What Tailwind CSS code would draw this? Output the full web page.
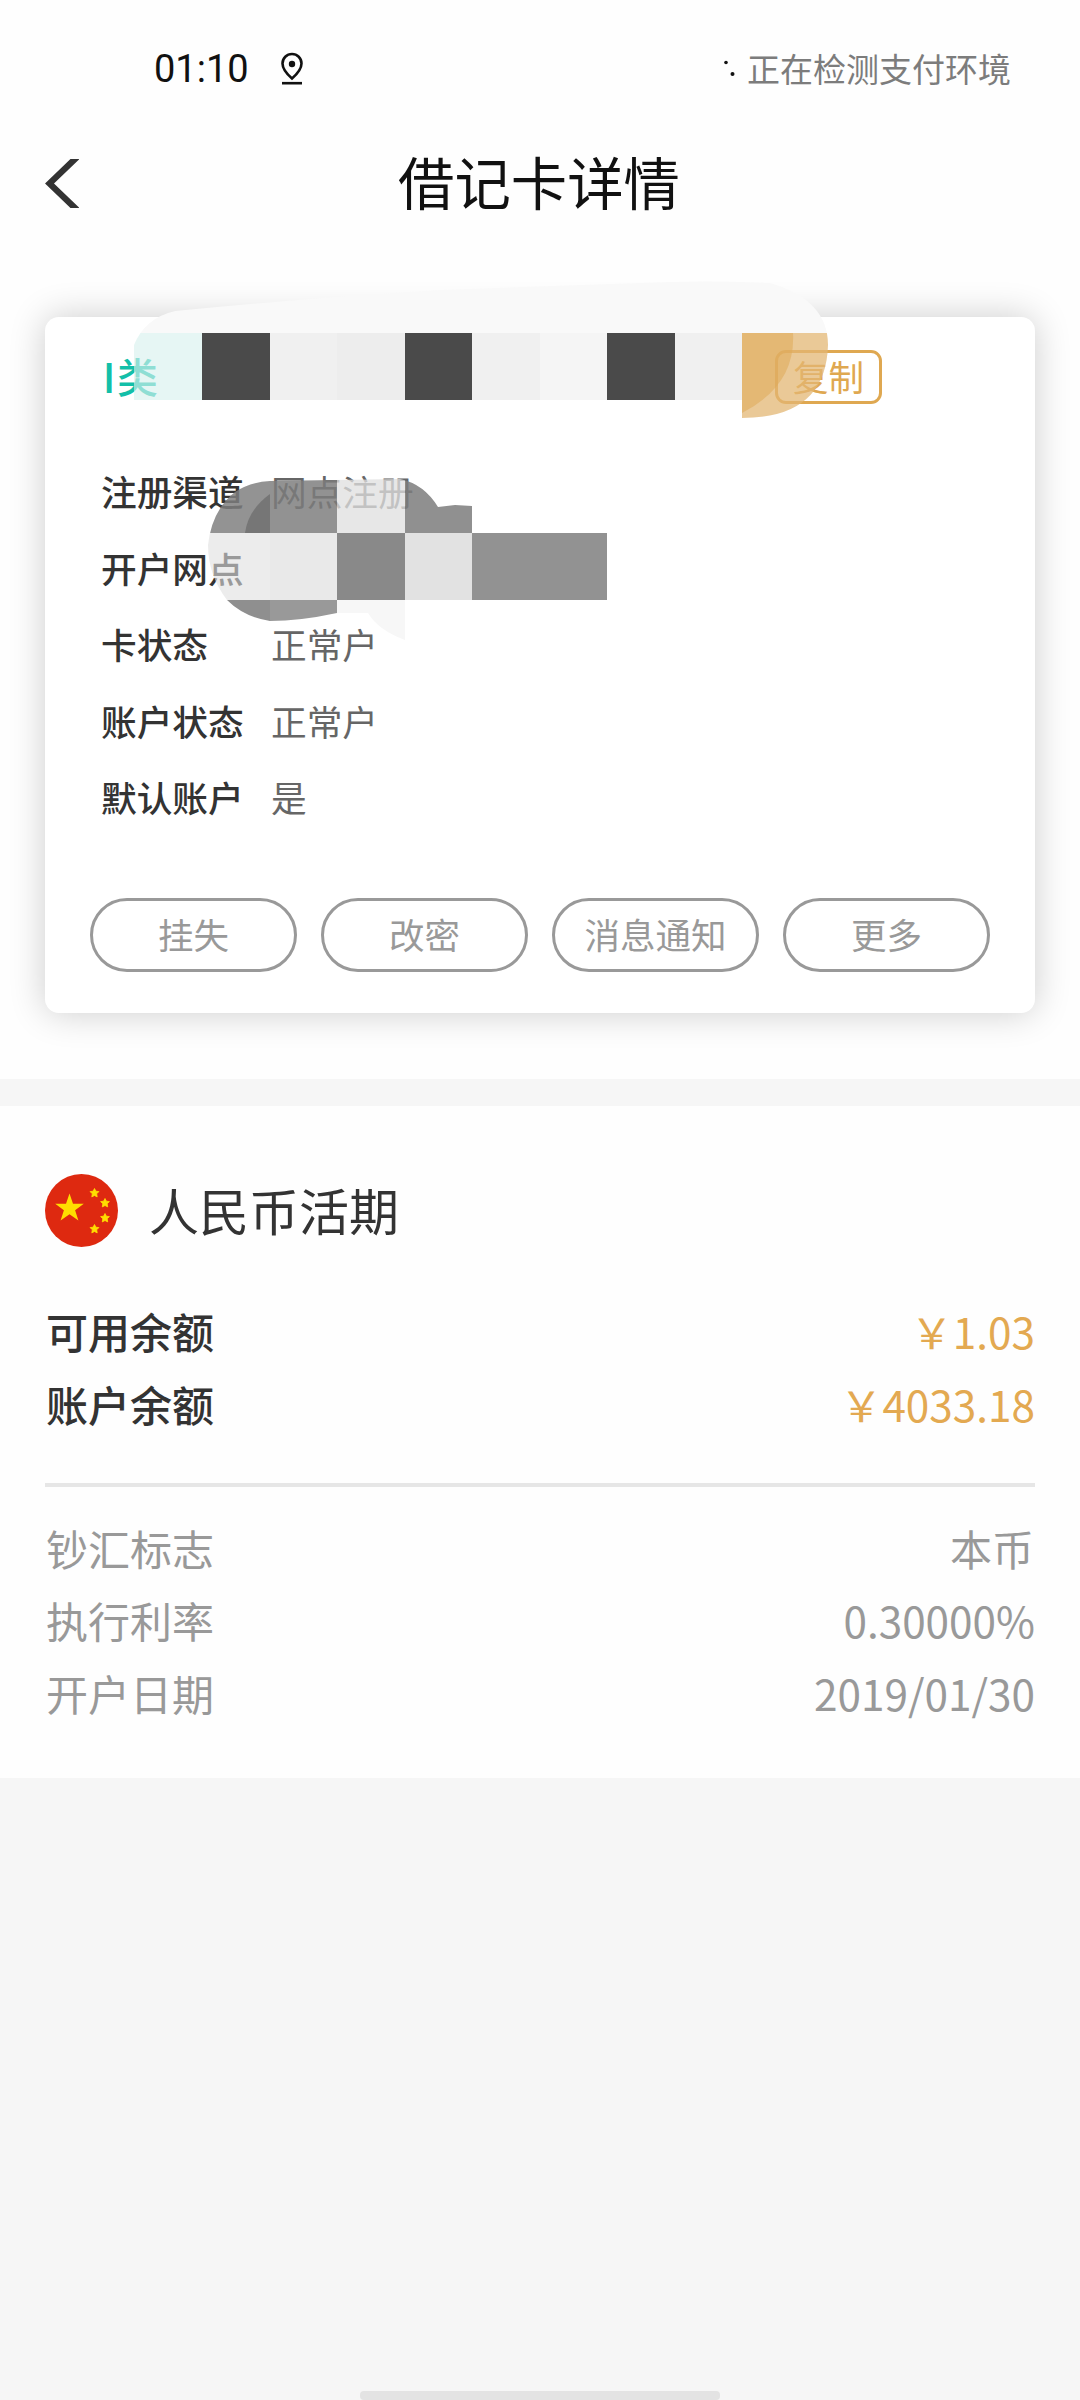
<!DOCTYPE html>
<html lang="zh-CN">
<head>
<meta charset="utf-8">
<title>借记卡详情</title>
<script src="https://cdn.jsdelivr.net/npm/@tailwindcss/browser@4"></script>
</head>
<body class="bg-[#f6f6f6] font-['Noto_Sans_CJK_SC',sans-serif] text-[#333]">
<div class="relative flex h-[2400px] w-[1080px] flex-col overflow-hidden">
  <section class="h-[1079px] bg-[#fefefe]">
    <div class="flex h-[138px] items-center pl-[154px] pr-[69px]">
      <span class="font-['Roboto',sans-serif] text-[38px] leading-none text-[#111]">01:10</span>
      <svg class="ml-[31px] h-[34px] w-[24px]" viewBox="0 0 24 34" fill="none" stroke="#111" stroke-width="2.600"><path d="M12 26.500C8 23 2.500 18 2.500 11.500a9.500 9.500 0 0 1 19 0C21.500 18 16 23 12 26.500z"/><circle cx="12" cy="12" r="3.200" fill="#111" stroke="none"/><path d="M2 31.200h20"/></svg>
      <svg class="ml-auto h-[20px] w-[12px]" viewBox="0 0 12 20" fill="#111"><circle cx="3" cy="3.500" r="1.800"/><circle cx="9.500" cy="15" r="2"/></svg>
      <span class="ml-[12px] pb-px text-[33px] leading-none text-[#7c7c7c]">正在检测支付环境</span>
    </div>
    <header class="flex h-[90px] items-center px-[45px]">
      <svg class="h-[49px] w-[34px]" viewBox="0 0 34 49" fill="none" stroke="#333" stroke-width="6.200"><path d="M32 -2L4.500 24.500L32 51"/></svg>
      <h1 class="ml-[319px] pb-[3px] text-[56.400px] leading-none text-[#111]">借记卡详情</h1>
    </header>
    <div class="mx-[45px] mt-[89px] flex h-[696px] flex-col rounded-[14px] bg-white pl-[56px] pr-[45px] pt-[33px] shadow-[0_0_36px_rgba(0,0,0,0.2)]">
      <div class="flex h-[54px] items-center">
        <span class="pb-[3px] text-[41px] font-medium leading-none text-[#13bfa9]"><span class="inline-block w-[16px] text-center">I</span>类</span>
        <button class="ml-auto mr-[108px] flex h-[54px] w-[107px] items-center justify-center rounded-[11px] border-[3px] border-[#dfa851] pb-[3px] text-[35.500px] leading-none text-[#dfa851]">复制</button>
      </div>
      <dl class="mt-[49px] grid grid-cols-[170px_1fr] auto-rows-[76.400px] items-center text-[35.700px] leading-none">
        <dt class="font-medium">注册渠道</dt><dd class="text-[#666]">网点注册</dd>
        <dt class="font-medium">开户网点</dt><dd></dd>
        <dt class="font-medium">卡状态</dt><dd class="text-[#666]">正常户</dd>
        <dt class="font-medium">账户状态</dt><dd class="text-[#666]">正常户</dd>
        <dt class="font-medium">默认账户</dt><dd class="text-[#666]">是</dd>
      </dl>
      <div class="-ml-[11px] mt-[63px] flex justify-between text-[35.500px] leading-none text-[#999]">
        <button class="flex h-[74px] w-[207px] items-center justify-center rounded-full border-[3px] border-[#999] pb-[3px]">挂失</button>
        <button class="flex h-[74px] w-[207px] items-center justify-center rounded-full border-[3px] border-[#999] pb-[3px]">改密</button>
        <button class="flex h-[74px] w-[207px] items-center justify-center rounded-full border-[3px] border-[#999] pb-[3px]">消息通知</button>
        <button class="flex h-[74px] w-[207px] items-center justify-center rounded-full border-[3px] border-[#999] pb-[3px]">更多</button>
      </div>
    </div>
  </section>
  <section class="mt-[27px] h-[672px] bg-[#fefefe] px-[45px] pt-[68px]">
    <div class="flex h-[73px] items-center">
      <svg class="h-[73px] w-[73px]" viewBox="0 0 73 73"><circle cx="36.500" cy="36.500" r="36.500" fill="#de2910"/><g fill="#ffde00"><path d="M24.500 19.500l3.500 10.300h10.800l-8.700 6.400 3.300 10.300-8.900-6.300-8.900 6.300 3.300-10.300-8.700-6.400h10.800z"/><path id="s" d="M49.500 14.500l1.400 2.700 3 .4-2.200 2.200.5 3.100-2.700-1.400-2.700 1.400.5-3.100-2.200-2.200 3-.4z" stroke="#ffde00" stroke-width=".8"/><use href="#s" x="10.500" y="10"/><use href="#s" x="10.500" y="25"/><use href="#s" y="36"/></g></svg>
      <h2 class="ml-[31px] pb-[3px] text-[50px] leading-none">人民币活期</h2>
    </div>
    <div class="mt-[48px] text-[42px]">
      <div class="flex h-[72.500px] items-center justify-between leading-none"><span class="pl-px font-medium">可用余额</span><span class="text-[42.300px] text-[#e3a951]">￥1.03</span></div>
      <div class="flex h-[72.500px] items-center justify-between leading-none"><span class="pl-px font-medium">账户余额</span><span class="text-[42.300px] text-[#e3a951]">￥4033.18</span></div>
    </div>
    <div class="mt-[43px] h-[4px] bg-[#e6e6e6]"></div>
    <div class="mt-[25px] text-[42px] text-[#999]">
      <div class="flex h-[72.300px] items-center justify-between leading-none"><span class="pl-px">钞汇标志</span><span class="pr-px">本币</span></div>
      <div class="flex h-[72.300px] items-center justify-between leading-none"><span class="pl-px">执行利率</span><span class="text-[42.300px]">0.30000%</span></div>
      <div class="flex h-[72.300px] items-center justify-between leading-none"><span class="pl-px">开户日期</span><span class="text-[42.300px]">2019/01/30</span></div>
    </div>
  </section>
  <div class="mx-auto mt-auto h-[9px] w-[360px] rounded-[4px] bg-[#e3e3e3]"></div>

  <!-- privacy mosaic over the card number and branch name -->
  <svg class="absolute left-0 top-0 h-[700px] w-[1080px]" viewBox="0 0 1080 700">
    <defs>
      <clipPath id="a"><path d="M134 400V345Q145 318 175 311Q320 297 440 290L640 283Q700 280 770 283Q828 300 828 345Q826 418 742 418V400z"/></clipPath>
      <clipPath id="b"><path d="M227 600Q208 575 208 545Q212 510 235 492Q250 482 270 481L400 479Q424 484 438 507L455 505L472 506V533H607V600H405V640Q378 630 368 613L337 613Q300 621 270 621Q244 617 227 600z"/></clipPath>
    </defs>
    <g clip-path="url(#a)">
      <path d="M134 270H830V333H134z" fill="#f9f9f9"/>
      <path d="M134 333H202V400H134z" fill="#d7f1ed" fill-opacity=".63"/>
      <path d="M202 333h68v67h-68zM405 333h67v67h-67zM607 333h68v67h-68z" fill="#4a4a4a"/>
      <path d="M270 333h67v67h-67zM472 333h68v67h-68zM675 333h67v67h-67z" fill="#f0f0f0"/>
      <path d="M337 333h68v67h-68z" fill="#ededed"/><path d="M540 333h67v67h-67z" fill="#f5f5f5"/>
      <path d="M742 333h90v90h-90z" fill="#e2b673" fill-opacity=".74"/>
      <path d="M742 333h51Q796 385 742 413z" fill="#dfa958" fill-opacity=".55"/>
    </g>
    <g clip-path="url(#b)">
      <path d="M200 467h70v66h-70z" fill="#7e7e7e" fill-opacity=".84"/>
      <path d="M245 533Q248 510 270 494V533z" fill="#6a6a6a" fill-opacity=".7"/>
      <path d="M270 467h67v66h-67z" fill="#7c7c7c" fill-opacity=".83"/>
      <path d="M337 467h68v66h-68z" fill="#dfdfdf" fill-opacity=".76"/>
      <path d="M405 467h67v66h-67z" fill="#7c7c7c" fill-opacity=".85"/>
      <path d="M200 533h70v67h-70z" fill="#dfdfdf" fill-opacity=".6"/>
      <path d="M270 533h67v67h-67z" fill="#e9e9e9"/><path d="M337 533h68v67h-68z" fill="#898989"/>
      <path d="M405 533h67v67h-67z" fill="#e2e2e2"/><path d="M472 533h135v67h-135z" fill="#929292"/>
      <path d="M200 600h70v30h-70z" fill="#8f8f8f"/><path d="M270 600h67v30h-67z" fill="#999"/>
      <path d="M337 600h68v42h-68z" fill="#f7f7f7"/>
    </g>
  </svg>
</div>
</body>
</html>
